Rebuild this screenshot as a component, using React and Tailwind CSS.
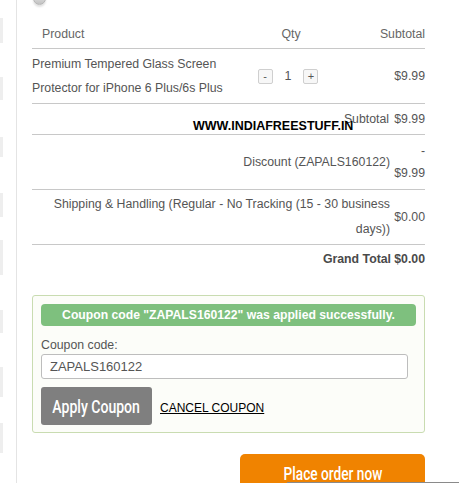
const leftBlocks = [
    { top: 18, h: 25 },
    { top: 77, h: 23 },
    { top: 137, h: 20 },
    { top: 193, h: 24 },
    { top: 240, h: 35 },
    { top: 310, h: 23 },
    { top: 367, h: 30 },
    { top: 423, h: 30 },
];

const QtyBox = ({ children }) => (
    <span className="flex h-[15px] w-[15px] items-center justify-center rounded-[2px] border border-[#cfcfcf] bg-[#f7f7f7] text-[11px] leading-none text-[#555]">
        {children}
    </span>
);

export default function App() {
    return (
        <div className="relative flex h-[483px] w-[459px] overflow-hidden bg-white font-['Liberation_Sans',Arial,sans-serif] text-[12.3px] text-[#555]">
            {/* left strip from the page behind */}
            <div className="relative w-[16px] shrink-0">
                {leftBlocks.map((b, i) => (
                    <div
                        key={i}
                        className="absolute left-0 w-[3px] bg-[#eeeeee]"
                        style={{ top: b.top, height: b.h }}
                    />
                ))}
            </div>

            <div className="w-[409px] shrink-0 border-l border-[#e4e4e4] pl-[15px]">
                {/* cut-off radio */}
                <div className="ml-[1px] mt-[-8px] h-[13px] w-[13px] rounded-full border border-[#b5b5b5] bg-gradient-to-b from-[#ececec] to-[#c2c2c2] shadow-[0_2px_2px_rgba(0,0,0,0.12)]" />

                {/* cart table */}
                <div className="mt-[15px] w-[393px]">
                    <div className="flex h-[29px] items-center border-b border-[#c8c8c8] text-[#666]">
                        <div className="w-[222px] pl-[10px]">Product</div>
                        <div className="w-[68px] pl-[6px] text-center">Qty</div>
                        <div className="flex-1 text-right">Subtotal</div>
                    </div>

                    <div className="flex h-[55px] items-center border-b border-[#c8c8c8]">
                        <div className="w-[222px] leading-[24px]">
                            Premium Tempered Glass Screen
                            <br />
                            Protector for iPhone 6 Plus/6s Plus
                        </div>
                        <div className="flex w-[68px] items-center justify-center">
                            <QtyBox>-</QtyBox>
                            <span className="mx-[12px] text-[12.5px]">1</span>
                            <QtyBox>+</QtyBox>
                        </div>
                        <div className="flex-1 text-right">$9.99</div>
                    </div>

                    <div className="flex h-[31px] items-center border-b border-[#c8c8c8]">
                        <div className="flex-1 pr-[3px] text-right">Subtotal</div>
                        <div className="w-[33px] text-right">$9.99</div>
                    </div>

                    <div className="flex h-[55px] items-center border-b border-[#c8c8c8]">
                        <div className="flex-1 pr-[2px] text-right">Discount (ZAPALS160122)</div>
                        <div className="w-[33px] text-right leading-[22px]">
                            <div>-</div>
                            <div>$9.99</div>
                        </div>
                    </div>

                    <div className="flex h-[55px] items-center border-b border-[#c8c8c8]">
                        <div className="flex-1 pl-[20px] pr-[2px] text-right leading-[25px]">
                            Shipping &amp; Handling (Regular - No Tracking (15 - 30 business days))
                        </div>
                        <div className="w-[33px] text-right">$0.00</div>
                    </div>

                    <div className="flex h-[29px] items-center font-bold text-[#4a4a4a]">
                        <div className="flex-1 pr-[1px] text-right">Grand Total</div>
                        <div className="w-[33px] text-right">$0.00</div>
                    </div>
                </div>

                {/* coupon */}
                <div className="mt-[21px] w-[393px] rounded-[3px] border border-[#c9dcb1] bg-[#fcfdf9] px-[8px] pb-[7px] pt-[8px]">
                    <div className="flex h-[22px] items-center justify-center rounded-[4px] bg-[#7ec07e] text-[12.2px] font-bold text-white">
                        Coupon code "ZAPALS160122" was applied successfully.
                    </div>
                    <div className="mt-[11px] leading-[16px]">Coupon code:</div>
                    <div className="mt-[1px] flex h-[25px] w-[367px] items-center rounded-[3px] border border-[#bdbdbd] bg-white pl-[8px] text-[13px] text-[#555]">
                        ZAPALS160122
                    </div>
                    <div className="mt-[8px] flex items-center">
                        <button className="flex h-[38px] w-[111px] items-center justify-center overflow-hidden whitespace-nowrap rounded-[3px] bg-[#7f7f7f] font-['Roboto',sans-serif] text-[18px] font-medium text-white">
                            <span className="inline-block scale-x-[0.78] whitespace-nowrap">Apply Coupon</span>
                        </button>
                        <a className="ml-[8px] mt-[4px] text-[12px] text-black underline">CANCEL COUPON</a>
                    </div>
                </div>

                <div className="mt-[21px] flex w-[393px] justify-end">
                    <button className="flex h-[42px] w-[185px] items-start justify-center whitespace-nowrap rounded-t-[5px] bg-[#f08300] pt-[6px] font-['Roboto',sans-serif] text-[18px] font-medium text-white">
                        <span className="inline-block scale-x-[0.76] whitespace-nowrap">Place order now</span>
                    </button>
                </div>
            </div>

            {/* watermark */}
            <div className="absolute left-[193px] top-[119px] text-[12.5px] font-bold leading-[15px] text-black">
                WWW.INDIAFREESTUFF.IN
            </div>

            <div className="absolute bottom-0 left-[287px] right-0 h-[1px] bg-[#8a8a8a]" />
        </div>
    );
}
